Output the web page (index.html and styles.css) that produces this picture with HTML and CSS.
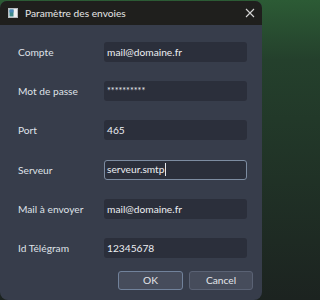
FILE: index.html
```html
<!DOCTYPE html>
<html lang="fr">
<head>
<meta charset="utf-8">
<title>Paramètre des envoies</title>
<link rel="stylesheet" href="styles.css">
</head>
<body>
<div class="window">
  <div class="titlebar">
    <svg class="app-icon" width="10" height="10" viewBox="0 0 10 10">
      <rect x="0.5" y="0.5" width="9" height="9" fill="#eef0f2" stroke="#b8bcc2"/>
      <rect x="1.5" y="1.5" width="4" height="7" fill="#3f8a8c"/>
      <rect x="1.5" y="1.5" width="4" height="3" fill="#4a86b8"/>
    </svg>
    <span class="title">Paramètre des envoies</span>
    <svg class="close" width="10" height="10" viewBox="0 0 10 10">
      <path d="M1 1 L9 9 M9 1 L1 9" stroke="#d4d4d4" stroke-width="1.1" fill="none"/>
    </svg>
  </div>
  <div class="content">
    <div class="form">
      <label class="label">Compte</label>
      <div class="field">mail@domaine.fr</div>
      <label class="label">Mot de passe</label>
      <div class="field password">**********</div>
      <label class="label">Port</label>
      <div class="field">465</div>
      <label class="label">Serveur</label>
      <div class="field focused">serveur.smtp<span class="caret"></span></div>
      <label class="label">Mail à envoyer</label>
      <div class="field">mail@domaine.fr</div>
      <label class="label">Id Télégram</label>
      <div class="field">12345678</div>
    </div>
    <div class="buttons">
      <button class="btn default">OK</button>
      <button class="btn">Cancel</button>
    </div>
  </div>
</div>
</body>
</html>
```
FILE: styles.css
```css
html, body {
  margin: 0;
  padding: 0;
}
html {
  background: linear-gradient(#2c5b35 0px, #24402c 60px, #1c2320 300px);
}
body {
  width: 264px;
  height: 300px;
  overflow: hidden;
  padding-top: 1px;
  box-sizing: border-box;
  font-family: Lato, "Open Sans", sans-serif;
  font-size: 10.2px;
}
.window {
  width: 262px;
  height: 299px;
  border-radius: 7px 7px 8px 8px;
  overflow: hidden;
  background: #373d4b;
  display: flex;
  flex-direction: column;
}
.titlebar {
  height: 24px;
  background: #1f1f1d;
  display: flex;
  align-items: center;
  padding: 0 7px 0 8px;
  color: #e6e6e6;
}
.app-icon {
  display: block;
  margin-right: 7px;
}
.title {
  flex: 1;
  font-size: 10.2px;
}
.close {
  display: block;
}
.content {
  display: flex;
  flex-direction: column;
  padding: 17px 0 0 18px;
}
.form {
  display: grid;
  grid-template-columns: 86px 143px;
  grid-auto-rows: 20px;
  row-gap: 19.2px;
  align-items: center;
}
.label {
  color: #dfe2e8;
}
.field {
  height: 20px;
  box-sizing: border-box;
  background: #2b2f3b;
  border-radius: 3px;
  color: #eceef2;
  padding: 0 3px;
  display: flex;
  align-items: center;
  line-height: 1;
}
.field.password {
  font-size: 9px;
  letter-spacing: 0;
  padding-bottom: 2px;
}
.field.focused {
  border: 1px solid #7d8ca1;
  padding: 0 2px;
}
.caret {
  display: inline-block;
  width: 1px;
  height: 13px;
  background: #e6e8ec;
  margin-left: 1px;
}
.buttons {
  display: flex;
  gap: 6px;
  margin-top: 13px;
  padding-left: 100px;
}
.btn {
  height: 19px;
  box-sizing: border-box;
  background: #464c5b;
  border: 1px solid #5a6274;
  border-radius: 3px;
  color: #e4e6ea;
  font-family: Lato, "Open Sans", sans-serif;
  font-size: 10.2px;
  padding: 0;
  width: 64px;
  line-height: 1;
}
.btn.default {
  width: 65px;
  border-color: #71829b;
}
```
